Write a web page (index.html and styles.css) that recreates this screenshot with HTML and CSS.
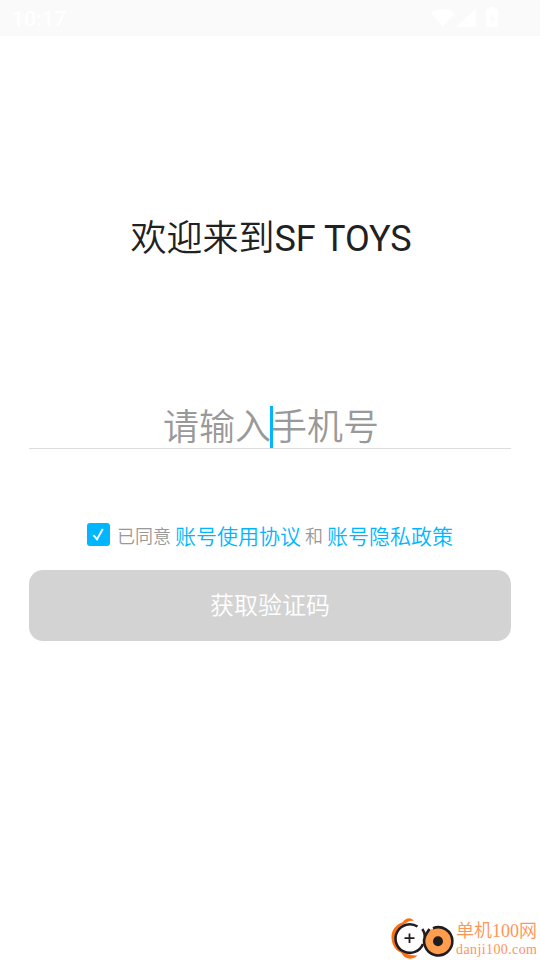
FILE: index.html
```html
<!DOCTYPE html>
<html lang="zh-CN">
<head>
<meta charset="utf-8">
<title>SF TOYS</title>
<link rel="stylesheet" href="styles.css">
</head>
<body>
<header class="status-bar">
  <span class="clock">10:17</span>
  <svg class="status-icons" width="68" height="20" viewBox="0 0 68 20" fill="#fff">
    <path d="M-1 5.200Q11-3 22.500 5.200L11 19Z"/>
    <path d="M43.500 1V19H24Z"/>
    <path fill-rule="evenodd" d="M58 -1h5v2h1.500a1.500 1.500 0 0 1 1.500 1.500V19H54V2.500A1.500 1.500 0 0 1 55.500 1H58ZM61 6 57.500 11.500h2v4.500l4-6h-2.500Z"/>
  </svg>
</header>
<main class="login">
  <h1 class="title"><span class="hanzi">欢迎来到</span>SF TOYS</h1>
  <div class="phone-field">
    <span class="placeholder">请输入手机号</span>
    <span class="caret"></span>
  </div>
  <div class="agreement">
    <span class="checkbox">
      <svg width="23" height="23" viewBox="0 0 23 23" fill="none" stroke="#fff" stroke-width="1.900"><path d="M6.500 12.100 10 16.300 15.800 6"/></svg>
    </span>
    <span class="agreed">已同意</span>
    <a class="link">账号使用协议</a>
    <span class="and">和</span>
    <a class="link">账号隐私政策</a>
  </div>
  <button class="submit" type="button">获取验证码</button>
</main>
<footer class="brand">
  <svg class="brand-mark" width="64" height="43" viewBox="0 0 64 43" fill="none">
    <path d="M23 4C20 0 15 .5 12 5 4 8 0 14 .5 21c.5 8 5 13 10 15 3 6 10 8 16 2.500C15 39 6 33 4 25 2 17 7 9 14 6.500 18 4 20 3.500 23 4Z" fill="#ff6f0f"/>
    <path d="M26.500 9.500A14.300 14.300 0 1 0 32 27" stroke="#211c20" stroke-width="2.600"/>
    <path d="M31.300 12Q34 15.500 34 20" stroke="#211c20" stroke-width="2.600"/>
    <path d="M18.500 16.500v9.500M13.500 21.200h10" stroke="#211c20" stroke-width="1.800"/>
    <circle cx="47.200" cy="24.300" r="13.800" fill="#ff9d4d"/>
    <path d="M42 11.200A14.100 14.100 0 1 1 35.500 16.500L38.500 12" stroke="#211c20" stroke-width="2.600"/>
    <circle cx="47" cy="24.300" r="5" fill="#211c20"/>
  </svg>
  <div class="brand-text">
    <span class="brand-name">单机100网</span>
    <span class="brand-url">danji100.com</span>
  </div>
</footer>
</body>
</html>
```

FILE: styles.css
```css
* { box-sizing: border-box; }
body {
  margin: 0;
  height: 960px;
  display: flex;
  flex-direction: column;
  background: #fff;
  font-family: Roboto, "Noto Sans CJK SC", sans-serif;
  overflow: hidden;
}
.status-bar {
  height: 36px;
  padding: 0 40px 0 12px;
  display: flex;
  align-items: center;
  justify-content: space-between;
  background: #fafafa;
  color: #fff;
}
.clock { font-size: 21px; font-weight: 500; letter-spacing: .2px; line-height: 38px; height: 36px; }
.status-icons { overflow: visible; }
.login { flex: 1; padding: 0 29px; }
.title {
  margin: 176px 0 0 2px;
  height: 54px;
  line-height: 54px;
  text-align: center;
  font-size: 36px;
  font-weight: 400;
  color: #212121;
  white-space: nowrap;
}
.hanzi { font-weight: 350; }
.phone-field {
  position: relative;
  margin-top: 134px;
  height: 49px;
  border-bottom: 1px solid #dcdcdc;
  text-align: center;
  font-size: 36px;
  font-weight: 350;
  line-height: 56px;
  color: #999;
}
.placeholder { display: block; padding-left: 2px; }
.caret {
  position: absolute;
  left: 241px;
  top: 6px;
  width: 3px;
  height: 42px;
  background: #00b7ff;
}
.agreement {
  display: flex;
  align-items: center;
  margin-top: 67px;
  padding-left: 58px;
  height: 36px;
  font-weight: 350;
  line-height: 41px;
  white-space: nowrap;
}
.checkbox { width: 23px; height: 23px; border-radius: 3px; background: #00b7ff; }
.checkbox svg { display: block; }
.agreed, .and, .link { height: 36px; }
.agreed { margin-left: 7px; font-size: 18px; color: #999; }
.and { margin: 0 4px; font-size: 18px; color: #999; }
.agreed + .link { margin-left: 4px; }
.link { font-size: 21px; line-height: 42px; color: #00b7ff; }
.submit {
  display: block;
  width: 100%;
  height: 71px;
  margin-top: 18px;
  padding: 2px 0 0;
  border: 0;
  border-radius: 14px;
  background: #d3d3d3;
  color: #fff;
  font: 350 24px/69px Roboto, "Noto Sans CJK SC", sans-serif;
}
.brand {
  height: 43px;
  padding-left: 391px;
  display: flex;
  gap: 1px;
}
.brand-mark { flex: none; }
.brand-text {
  display: flex;
  flex-direction: column;
  color: #ff9457;
  font-family: "Liberation Serif", "Noto Sans CJK SC", serif;
  white-space: nowrap;
}
.brand-name { font-size: 18px; line-height: 29px; height: 26px; font-weight: 350; }
.brand-url { font-size: 14px; line-height: 14px; letter-spacing: .4px; }
```
